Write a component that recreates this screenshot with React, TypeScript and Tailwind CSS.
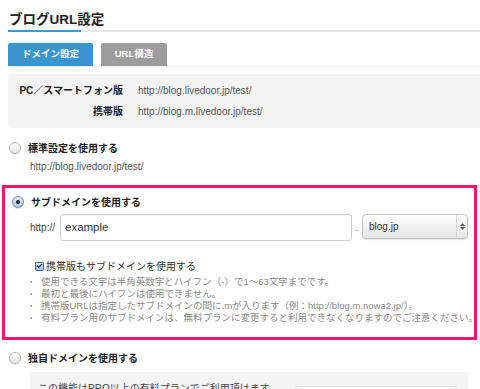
import { Check } from 'lucide-react'

// ── Radio (mac-style) ─────────────────────────────────────────────────────────

function Radio({ checked }: { checked?: boolean }) {
  if (checked) {
    return (
      <span className="flex size-[12px] shrink-0 items-center justify-center rounded-full border border-[#6f8fb8] bg-gradient-to-b from-[#e3eefa] to-[#a9c5e6] shadow-[0_1px_1px_rgba(0,0,0,0.15)]">
        <span className="size-[4px] rounded-full bg-[#2a2a2a]" />
      </span>
    )
  }
  return (
    <span className="size-[12px] shrink-0 rounded-full border border-[#b5b5b5] bg-gradient-to-b from-white to-[#e6e6e6] shadow-[0_1px_1px_rgba(0,0,0,0.08)]" />
  )
}

function Bullet({ children }: { children: React.ReactNode }) {
  return (
    <li className="flex items-center">
      <span className="ml-[1px] mr-[9px] size-[2px] shrink-0 rounded-full bg-[#9a9a9a]" />
      <span className="whitespace-nowrap">{children}</span>
    </li>
  )
}

// ── Page ──────────────────────────────────────────────────────────────────────

export default function App() {
  return (
    <div
      className="h-[389px] w-[480px] overflow-hidden bg-white text-[#333]"
      style={{ fontFamily: '"Liberation Sans", "Noto Sans CJK JP", sans-serif' }}
    >
      {/* header */}
      <div className="ml-2 border-b-2 border-[#e8e8e8] pt-[10px]">
        <div className="-mb-[2px] w-[73px] whitespace-nowrap border-b-2 border-[#3d98d3] pl-[1px] text-[13.5px] font-bold leading-[20px] text-[#222]">
          ブログURL設定
        </div>
      </div>

      {/* tabs */}
      <div className="ml-2 mt-[11px] flex gap-2 border-b border-[#f0f0f0]">
        <div className="flex h-[23px] w-[85px] items-center justify-center rounded-t-[2px] bg-[#3a95cf] text-[9.5px] font-bold text-white">
          ドメイン設定
        </div>
        <div className="flex h-[23px] w-[66px] items-center justify-center rounded-t-[2px] bg-[#9d9d9d] text-[9.5px] font-bold text-white">
          URL構造
        </div>
      </div>

      {/* current urls */}
      <div className="ml-2 mt-[7px] h-[54px] rounded-l-[3px] bg-[#f4f4f4] pt-[6px]">
        <div className="grid grid-cols-[115px_1fr] gap-x-[15px] text-[10px]">
          <div className="flex h-[21px] items-center justify-end font-bold text-[#222]">PC／スマートフォン版</div>
          <div className="flex h-[21px] items-center text-[#555]">http://blog.livedoor.jp/test/</div>
          <div className="flex h-[21px] items-center justify-end font-bold text-[#222]">携帯版</div>
          <div className="flex h-[21px] items-center text-[#555]">http://blog.m.livedoor.jp/test/</div>
        </div>
      </div>

      {/* default */}
      <div className="mt-[12px] flex h-[16px] items-center gap-[7px] pl-[9px]">
        <Radio />
        <span className="text-[10px] font-bold text-[#222]">標準設定を使用する</span>
      </div>
      <div className="mt-[3px] flex h-[14px] items-center pl-[30px] text-[10px] text-[#555]">
        http://blog.livedoor.jp/test/
      </div>

      {/* subdomain */}
      <div className="ml-[2px] mt-[12px] w-[475px] border-[3px] border-[#fb1467] pb-[13px] pl-[4px] pt-[6px]">
        <div className="flex h-[16px] items-center gap-[7px] pl-[3px]">
          <Radio checked />
          <span className="text-[10px] font-bold text-[#222]">サブドメインを使用する</span>
        </div>

        <div className="mt-[4px] flex h-[27px] items-center pl-[21px]">
          <span className="w-[30px] text-[10px] text-[#444]">http://</span>
          <div className="flex h-[27px] w-[292px] items-center rounded-[3px] border border-[#cfcfcf] bg-white pl-[4px] text-[11.5px] text-[#333] shadow-[inset_0_1px_1px_rgba(0,0,0,0.05)]">
            example
          </div>
          <span className="w-[10px] text-center text-[10px] text-[#555]">.</span>
          <div className="flex h-[25px] w-[106px] self-start items-center rounded-[4px] border border-[#c2c2c2] bg-gradient-to-b from-white to-[#e6e6e6] text-[10px] text-[#333] shadow-[0_1px_1px_rgba(0,0,0,0.12)]">
            <span className="flex-1 pl-[6px]">blog.jp</span>
            <span className="flex h-full w-[11px] flex-col items-center justify-center gap-[1px] border-l border-[#d6d6d6]">
              <svg width="5" height="3" viewBox="0 0 5 3"><path d="M2.5 0L5 3H0z" fill="#555" /></svg>
              <svg width="5" height="3" viewBox="0 0 5 3"><path d="M0 0h5L2.5 3z" fill="#555" /></svg>
            </span>
          </div>
        </div>

        <div className="mt-[19px] flex h-[12px] items-center pl-[26px]">
          <span className="mr-[2px] flex size-[9px] items-center justify-center rounded-[1px] border border-[#4a6d9a] bg-gradient-to-b from-[#d9e7f7] to-[#9fbfe3]">
            <Check className="size-[8px] text-[#1c2a3a]" strokeWidth={4} />
          </span>
          <span className="text-[10px] text-[#333]">携帯版もサブドメインを使用する</span>
        </div>

        <ul className="mt-[4px] pl-[20px] text-[9.5px] leading-[12px] text-[#8a8a8a]">
          <Bullet>使用できる文字は半角英数字とハイフン（-）で1～63文字までです。</Bullet>
          <Bullet>最初と最後にハイフンは使用できません。</Bullet>
          <Bullet>携帯版URLは指定したサブドメインの間に.mが入ります（例：http://blog.m.nowa2.jp/）。</Bullet>
          <Bullet>有料プラン用のサブドメインは、無料プランに変更すると利用できなくなりますのでご注意ください。</Bullet>
        </ul>
      </div>

      {/* custom domain */}
      <div className="mt-[10px] flex h-[16px] items-center gap-[7px] pl-[9px]">
        <Radio />
        <span className="text-[10px] font-bold text-[#222]">独自ドメインを使用する</span>
      </div>
      <div className="ml-[30px] mt-[6px] flex h-[40px] w-[438px] items-start justify-between rounded-[3px] bg-[#f4f4f4] pl-[8px] pr-[11px] pt-[10px]">
        <span className="text-[10px] leading-[14px] text-[#444]">この機能はPRO以上の有料プランでご利用頂けます。</span>
        <div className="mt-[4px] h-[24px] w-[162px] rounded-[3px] border border-[#dcdcdc] bg-white" />
      </div>
    </div>
  )
}
